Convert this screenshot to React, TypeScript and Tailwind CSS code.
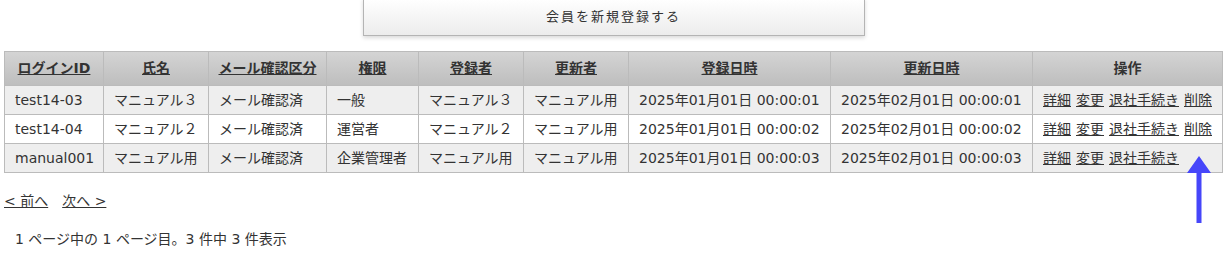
import React from 'react'

type Row = {
  id: string
  name: string
  mail: string
  role: string
  creator: string
  updater: string
  created: string
  updated: string
  canDelete: boolean
}

const rows: Row[] = [
  { id: 'test14-03', name: 'マニュアル３', mail: 'メール確認済', role: '一般', creator: 'マニュアル３', updater: 'マニュアル用', created: '2025年01月01日 00:00:01', updated: '2025年02月01日 00:00:01', canDelete: true },
  { id: 'test14-04', name: 'マニュアル２', mail: 'メール確認済', role: '運営者', creator: 'マニュアル２', updater: 'マニュアル用', created: '2025年01月01日 00:00:02', updated: '2025年02月01日 00:00:02', canDelete: true },
  { id: 'manual001', name: 'マニュアル用', mail: 'メール確認済', role: '企業管理者', creator: 'マニュアル用', updater: 'マニュアル用', created: '2025年01月01日 00:00:03', updated: '2025年02月01日 00:00:03', canDelete: false },
]

const headers = ['ログインID', '氏名', 'メール確認区分', '権限', '登録者', '更新者', '登録日時', '更新日時']
const widths = ['w-[99px]', 'w-[105px]', 'w-[118px]', 'w-[92px]', 'w-[105px]', 'w-[105px]', 'w-[202px]', 'w-[202px]', 'w-[190px]']

const Cell = ({ children }: { children: React.ReactNode }) => (
  <td className="border border-[#bbbbbb] pl-[10px] pr-1 h-[29px] whitespace-nowrap">{children}</td>
)

const App = () => (
  <div className="relative w-[1229px] h-[263px] bg-white text-[#333] text-[14px] font-['DejaVu_Sans','Noto_Sans_CJK_JP',sans-serif] overflow-hidden">
    <div className="flex justify-center">
      <button className="mt-[-2px] ml-[-2px] w-[502px] h-[38px] border border-[#b4b4b4] bg-gradient-to-b from-white to-[#ececec] shadow-[0_2px_4px_rgba(0,0,0,0.15)] text-[13px] text-[#333] tracking-[2px]">
        会員を新規登録する
      </button>
    </div>

    <table className="table-fixed border-collapse ml-[4px] mt-[15px] w-[1219px]">
      <colgroup>
        {widths.map((w, i) => <col key={i} className={w} />)}
      </colgroup>
      <thead>
        <tr className="bg-gradient-to-b from-[#d4d4d4] to-[#bdbdbd]">
          {headers.map(h => (
            <th key={h} className="border border-[#bbbbbb] h-[34px] font-bold text-center">
              <a className="underline">{h}</a>
            </th>
          ))}
          <th className="border border-[#bbbbbb] h-[34px] font-bold text-center">操作</th>
        </tr>
      </thead>
      <tbody>
        {rows.map((r, i) => (
          <tr key={r.id} className={i % 2 === 0 ? 'bg-[#eeeeee]' : 'bg-white'}>
            <Cell>{r.id}</Cell>
            <Cell>{r.name}</Cell>
            <Cell>{r.mail}</Cell>
            <Cell>{r.role}</Cell>
            <Cell>{r.creator}</Cell>
            <Cell>{r.updater}</Cell>
            <Cell>{r.created}</Cell>
            <Cell>{r.updated}</Cell>
            <Cell>
              <span className="flex gap-[5px]">
                <a className="underline">詳細</a>
                <a className="underline">変更</a>
                <a className="underline">退社手続き</a>
                {r.canDelete && <a className="underline">削除</a>}
              </span>
            </Cell>
          </tr>
        ))}
      </tbody>
    </table>

    <div className="flex gap-[14px] ml-[4px] mt-[18px]">
      <a className="underline">&lt; 前へ</a>
      <a className="underline">次へ &gt;</a>
    </div>

    <p className="ml-[15px] mt-[17px]">1 ページ中の 1 ページ目。3 件中 3 件表示</p>

    {/* annotation arrow */}
    <svg className="absolute left-[1185px] top-[154px]" width="28" height="70" viewBox="0 0 28 70">
      <path d="M14 2 L26 19 L16.5 19 L16.5 69 L11.5 69 L11.5 19 L2 19 Z" fill="#4646fa" />
    </svg>
  </div>
)

export default App
